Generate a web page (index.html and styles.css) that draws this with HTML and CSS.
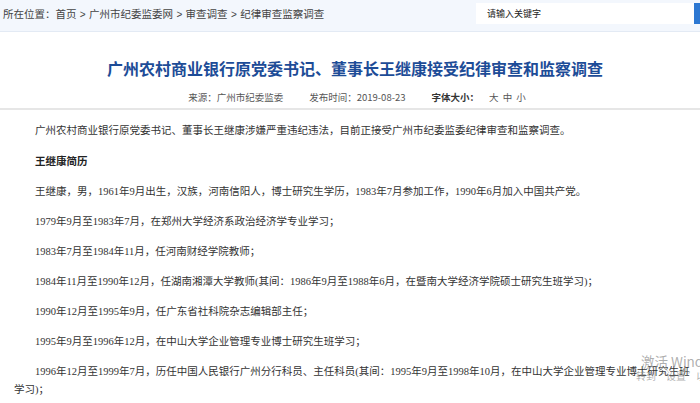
FILE: index.html
```html
<!DOCTYPE html>
<html lang="zh-CN">
<head>
    <meta charset="UTF-8">
    <meta name="viewport" content="width=device-width, initial-scale=1.0">
    <title>广州农村商业银行原党委书记、董事长王继康接受纪律审查和监察调查</title>
    <link rel="stylesheet" href="styles.css">
</head>
<body>
    <!-- 顶部位置栏 -->
    <div class="top-bar">
        <div class="crumbs">所在位置：首页 <span class="sep">&gt;</span> 广州市纪委监委网 <span class="sep">&gt;</span> 审查调查 <span class="sep">&gt;</span> 纪律审查监察调查</div>
        <div class="search">
            <input class="search-input" type="text" placeholder="请输入关键字">
            <button class="search-btn"></button>
        </div>
    </div>

    <!-- 标题 -->
    <div class="article-head">
        <h1>广州农村商业银行原党委书记、董事长王继康接受纪律审查和监察调查</h1>
        <div class="meta">
            <span>来源：广州市纪委监委</span>
            <span>发布时间：2019-08-23</span>
            <span><b>字体大小：</b><span class="size-links">大 中 小</span></span>
        </div>
    </div>

    <!-- 正文 -->
    <div class="article-body">
        <p>广州农村商业银行原党委书记、董事长王继康涉嫌严重违纪违法，目前正接受广州市纪委监委纪律审查和监察调查。</p>
        <p><b>王继康简历</b></p>
        <p>王继康，男，1961年9月出生，汉族，河南信阳人，博士研究生学历，1983年7月参加工作，1990年6月加入中国共产党。</p>
        <p>1979年9月至1983年7月，在郑州大学经济系政治经济学专业学习；</p>
        <p>1983年7月至1984年11月，任河南财经学院教师；</p>
        <p>1984年11月至1990年12月，任湖南湘潭大学教师(其间：1986年9月至1988年6月，在暨南大学经济学院硕士研究生班学习)；</p>
        <p>1990年12月至1995年9月，任广东省社科院杂志编辑部主任；</p>
        <p>1995年9月至1996年12月，在中山大学企业管理专业博士研究生班学习；</p>
        <p>1996年12月至1999年7月，历任中国人民银行广州分行科员、主任科员(其间：1995年9月至1998年10月，在中山大学企业管理专业博士研究生班学习)；</p>
    </div>

    <div class="watermark">
        <div class="wm-big">激活 Windows</div>
        <div class="wm-small">转到“设置”以激活Windows。</div>
    </div>
</body>
</html>
```

FILE: styles.css
```css
/* 全局 */
body {
    margin: 0;
    padding: 0;
    background: #fff;
    color: #333;
    font-family: "Noto Sans CJK SC", "Noto Sans", sans-serif;
    overflow: hidden;
}

/* 顶部位置栏 */
.top-bar {
    display: flex;
    justify-content: space-between;
    align-items: flex-start;
    height: 31px;
    background-color: #f3f7fd;
    border-bottom: 1px solid #e3eaf4;
    padding-left: 3px;
}

.crumbs {
    font-size: 10.5px;
    line-height: 28px;
    color: #444;
}

.crumbs .sep {
    font-family: "Liberation Sans", sans-serif;
    font-size: 10px;
    margin: 0 1px;
}

.search {
    display: flex;
    margin-top: 3px;
}

.search-input {
    width: 218px;
    height: 21px;
    box-sizing: border-box;
    border: none;
    padding: 0 11px;
    font-size: 9px;
    font-family: "Noto Sans CJK SC", sans-serif;
    background: #fff;
    outline: none;
}

.search-input::placeholder {
    color: #222;
}

.search-btn {
    width: 6px;
    height: 21px;
    border: none;
    padding: 0;
    background-color: #2d78d2;
}

/* 标题 */
.article-head {
    text-align: center;
    border-bottom: 2px solid #e6e6e6;
    padding: 25px 0 4px;
}

.article-head h1 {
    margin: 0;
    font-size: 16px;
    line-height: 22px;
    font-weight: bold;
    color: #1d4c97;
    padding-left: 10px;
}

.meta {
    margin-top: 11px;
    font-size: 9.5px;
    line-height: 14px;
    color: #555;
    display: flex;
    justify-content: center;
    gap: 26px;
    padding-left: 14px;
}

.meta b {
    color: #333;
}

.size-links {
    margin-left: 10px;
    word-spacing: 2px;
}

/* 正文 */
.article-body {
    padding: 12px 5px 0 14px;
    font-family: "Liberation Serif", "Noto Sans CJK SC", serif;
    font-size: 10.5px;
    color: #333;
}

.article-body p {
    margin: 0 0 12px;
    line-height: 18px;
    text-indent: 21px;
}

.article-body b {
    font-family: "Noto Sans CJK SC", sans-serif;
    color: #222;
}

/* 激活水印 */
.watermark {
    position: absolute;
    left: 636px;
    top: 353px;
    color: rgba(140, 140, 140, 0.7);
    font-family: "Noto Sans CJK SC", sans-serif;
    white-space: nowrap;
    pointer-events: none;
}

.wm-big {
    font-size: 13.5px;
    line-height: 16px;
    padding-left: 5px;
}

.wm-small {
    font-size: 10px;
    line-height: 13px;
}
```
